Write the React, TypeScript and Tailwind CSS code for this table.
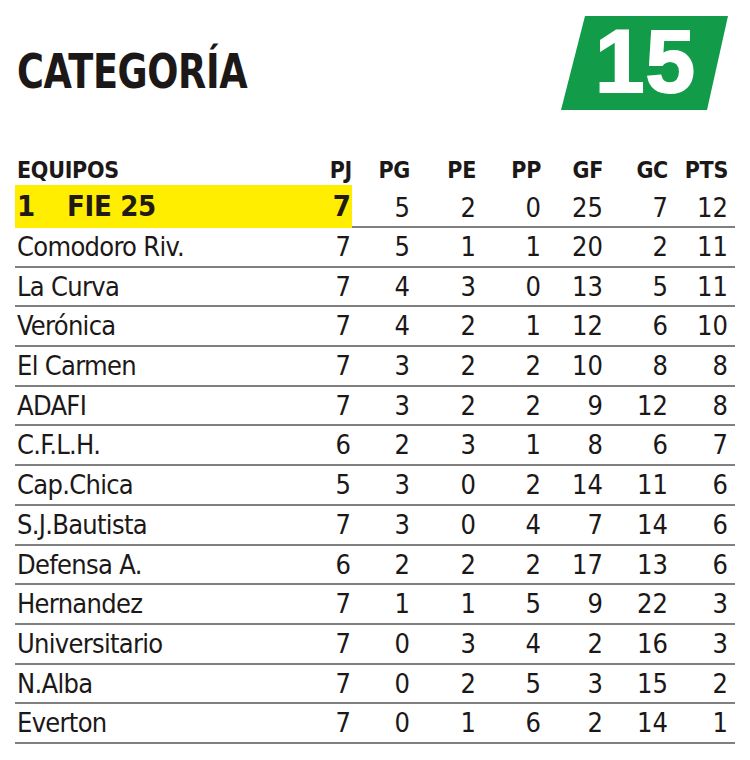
type Row = {
  name: string;
  pj: number;
  pg: number;
  pe: number;
  pp: number;
  gf: number;
  gc: number;
  pts: number;
};

const rows: Row[] = [
  { name: "Comodoro Riv.", pj: 7, pg: 5, pe: 1, pp: 1, gf: 20, gc: 2, pts: 11 },
  { name: "La Curva", pj: 7, pg: 4, pe: 3, pp: 0, gf: 13, gc: 5, pts: 11 },
  { name: "Verónica", pj: 7, pg: 4, pe: 2, pp: 1, gf: 12, gc: 6, pts: 10 },
  { name: "El Carmen", pj: 7, pg: 3, pe: 2, pp: 2, gf: 10, gc: 8, pts: 8 },
  { name: "ADAFI", pj: 7, pg: 3, pe: 2, pp: 2, gf: 9, gc: 12, pts: 8 },
  { name: "C.F.L.H.", pj: 6, pg: 2, pe: 3, pp: 1, gf: 8, gc: 6, pts: 7 },
  { name: "Cap.Chica", pj: 5, pg: 3, pe: 0, pp: 2, gf: 14, gc: 11, pts: 6 },
  { name: "S.J.Bautista", pj: 7, pg: 3, pe: 0, pp: 4, gf: 7, gc: 14, pts: 6 },
  { name: "Defensa A.", pj: 6, pg: 2, pe: 2, pp: 2, gf: 17, gc: 13, pts: 6 },
  { name: "Hernandez", pj: 7, pg: 1, pe: 1, pp: 5, gf: 9, gc: 22, pts: 3 },
  { name: "Universitario", pj: 7, pg: 0, pe: 3, pp: 4, gf: 2, gc: 16, pts: 3 },
  { name: "N.Alba", pj: 7, pg: 0, pe: 2, pp: 5, gf: 3, gc: 15, pts: 2 },
  { name: "Everton", pj: 7, pg: 0, pe: 1, pp: 6, gf: 2, gc: 14, pts: 1 },
];

// column right edges follow the printed table: PJ 351, PG 410 ... PTS 728
const cols = "grid grid-cols-[296px_41px_58px_66px_65px_62px_65px_60px] pr-[5px]";
const headers = ["PJ", "PG", "PE", "PP", "GF", "GC", "PTS"];

export default function App() {
  return (
    <main className="h-[760px] w-[750px] bg-white font-['DejaVu_Sans_Condensed','Liberation_Sans',sans-serif] text-[#1c1818]">
      <header className="flex items-start justify-between pl-[17px] pr-[22px] pt-[16px]">
        <h1 className="mt-[31px] origin-left scale-x-[0.85] text-[48px] font-bold leading-none tracking-[-0.5px]">
          CATEGORÍA
        </h1>
        <div className="flex h-[94px] w-[167px] items-center justify-center bg-[#129b48] [clip-path:polygon(24px_0,100%_0,146px_100%,0_100%)]">
          <span className="pb-[4px] pl-[2px] font-['Liberation_Sans',sans-serif] text-[89px] font-bold leading-none tracking-[1px] text-white [-webkit-text-stroke:2px_white]">
            15
          </span>
        </div>
      </header>

      <section className="mt-[46px] px-[15px]">
        <div className={`${cols} h-[29px] text-[23px] font-bold leading-[29px] tracking-[-0.3px]`}>
          <span className="pl-[2px]">EQUIPOS</span>
          {headers.map((h) => (
            <span key={h} className="text-right">
              {h}
            </span>
          ))}
        </div>

        <div className={`${cols} h-[43px] border-b-2 border-[#7f7f7f] text-[27px] leading-[41px]`}>
          <span className="flex bg-[#ffee00] pl-[2px] pt-[1px] text-[29px] font-bold text-[#221a14]">
            <span className="w-[50px]">1</span>
            <span className="tracking-[-0.3px]">FIE 25</span>
          </span>
          <span className="bg-[#ffee00] pr-[1px] pt-[1px] text-right text-[29px] font-bold text-[#221a14]">7</span>
          {[5, 2, 0, 25, 7, 12].map((v, i) => (
            <span key={i} className="pt-[2px] text-right">
              {v}
            </span>
          ))}
        </div>

        {rows.map((r) => (
          <div
            key={r.name}
            className={`${cols} h-[39.7px] border-b-2 border-[#7f7f7f] text-[27px] leading-[37.7px]`}
          >
            <span className="pl-[2px] tracking-[-0.7px]">{r.name}</span>
            <span className="pr-[1px] text-right">{r.pj}</span>
            <span className="text-right">{r.pg}</span>
            <span className="text-right">{r.pe}</span>
            <span className="text-right">{r.pp}</span>
            <span className="text-right">{r.gf}</span>
            <span className="text-right">{r.gc}</span>
            <span className="text-right">{r.pts}</span>
          </div>
        ))}
      </section>
    </main>
  );
}
